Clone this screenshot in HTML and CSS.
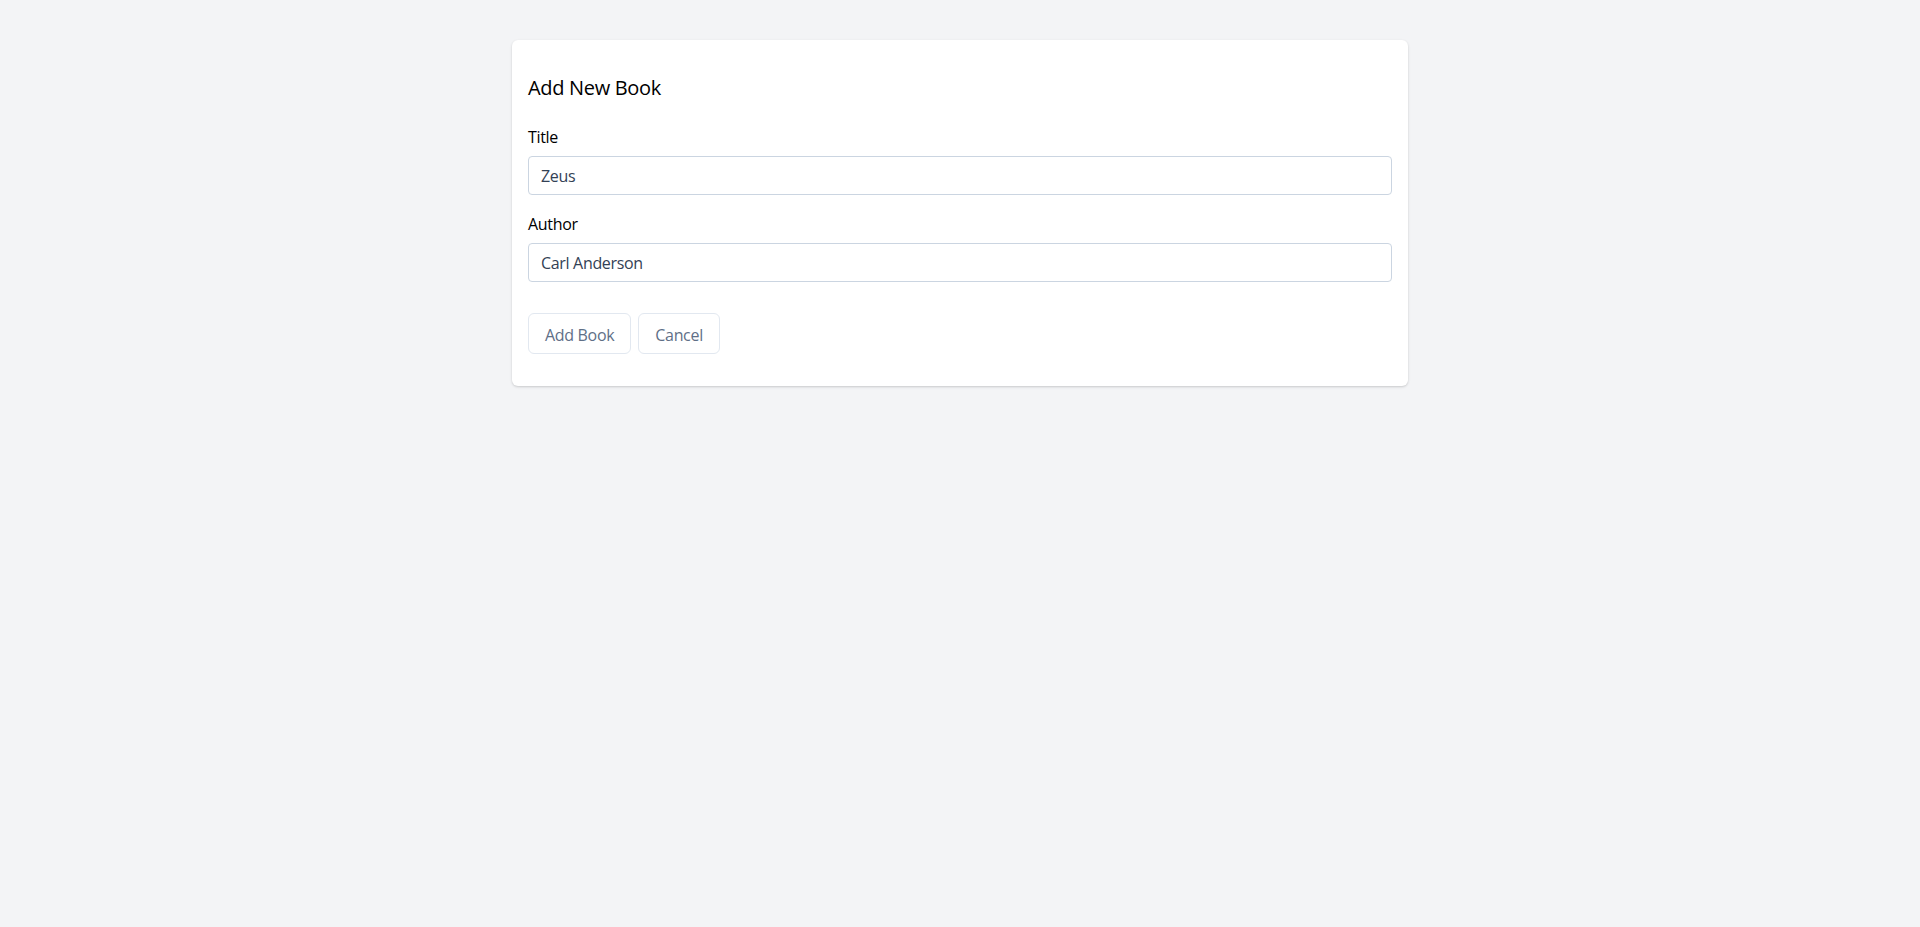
FILE: index.html
```html
<!DOCTYPE html>
<html lang="en">
<head>
<meta charset="utf-8">
<title>Add New Book</title>
<link rel="stylesheet" href="styles.css">
</head>
<body>
<main class="page">
  <section class="card">
    <h2 class="card-title">Add New Book</h2>
    <form class="book-form">
      <div class="field">
        <label class="field-label" for="title">Title</label>
        <input class="field-input" id="title" type="text" value="Zeus">
      </div>
      <div class="field">
        <label class="field-label" for="author">Author</label>
        <input class="field-input" id="author" type="text" value="Carl Anderson">
      </div>
      <div class="actions">
        <button class="btn" type="button">Add Book</button>
        <button class="btn" type="button">Cancel</button>
      </div>
    </form>
  </section>
</main>
</body>
</html>
```

FILE: styles.css
```css
* { box-sizing: border-box; }
html, body { margin: 0; padding: 0; }
body {
  background: #f3f4f6;
  font-family: "Open Sans", "Noto Sans", sans-serif;
  letter-spacing: -0.02em;
  color: #000;
  min-height: 927px;
}
.page {
  display: flex;
  justify-content: center;
  padding-top: 40px;
}
.card {
  width: 896px;
  background: #fff;
  border-radius: 6px;
  box-shadow: 0 1px 3px rgba(0,0,0,0.12), 0 1px 2px rgba(0,0,0,0.06);
  padding: 34px 16px 32px;
}
.card-title {
  margin: 0 0 23px;
  font-size: 20px;
  line-height: 28px;
  font-weight: 400;
}
.book-form {
  display: flex;
  flex-direction: column;
}
.field {
  display: flex;
  flex-direction: column;
  margin-bottom: 17px;
}
.field-label {
  font-size: 16px;
  line-height: 24px;
  margin-bottom: 7px;
}
.field-input {
  height: 39px;
  border: 1px solid #cbd5e1;
  border-radius: 4px;
  padding: 0 12px;
  font-family: inherit;
  letter-spacing: inherit;
  font-size: 16px;
  color: #334155;
  background: #fff;
  outline: none;
}
.actions {
  display: flex;
  gap: 7px;
  margin-top: 14px;
}
.btn {
  height: 41px;
  padding: 2px 16px 0;
  border: 1px solid #e2e8f0;
  border-radius: 6px;
  background: #fff;
  color: #5f6f87;
  font-family: inherit;
  letter-spacing: inherit;
  font-size: 16px;
  cursor: pointer;
}
```
